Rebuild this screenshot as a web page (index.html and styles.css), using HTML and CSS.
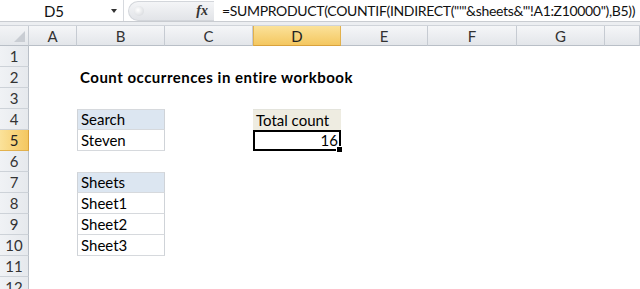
FILE: index.html
```html
<!DOCTYPE html>
<html>
<head>
<meta charset="utf-8">
<link rel="stylesheet" href="styles.css">
</head>
<body>
<div class="app">
  <div class="fbar">
    <div class="namebox"><span class="nb-text">D5</span><span class="nb-arrow"></span></div>
    <div class="fx-pill"><span class="knob"></span><span class="fx">fx</span></div>
    <div class="formula">=SUMPRODUCT(COUNTIF(INDIRECT("'"&amp;sheets&amp;"'!A1:Z10000"),B5))</div>
  </div>
  <div class="gap"></div>
  <div class="sheet">
    <div class="corner"><span class="tri"></span></div>
    <div class="ch">A</div><div class="ch">B</div><div class="ch">C</div><div class="ch ch-sel">D</div><div class="ch">E</div><div class="ch">F</div><div class="ch">G</div><div class="ch"></div>

    <div class="rh">1</div><div class="c"></div><div class="c"></div><div class="c"></div><div class="c"></div><div class="c"></div><div class="c"></div><div class="c"></div><div class="c"></div>

    <div class="rh">2</div><div class="c"></div><div class="c title">Count occurrences in entire workbook</div><div class="c"></div><div class="c"></div><div class="c"></div><div class="c"></div><div class="c"></div><div class="c"></div>

    <div class="rh">3</div><div class="c"></div><div class="c"></div><div class="c"></div><div class="c"></div><div class="c"></div><div class="c"></div><div class="c"></div><div class="c"></div>

    <div class="rh">4</div><div class="c"></div><div class="c tb top hdr-blue">Search</div><div class="c"></div><div class="c tot">Total count</div><div class="c"></div><div class="c"></div><div class="c"></div><div class="c"></div>

    <div class="rh rh-sel">5</div><div class="c"></div><div class="c tb">Steven</div><div class="c"></div><div class="c active">16<span class="handle"></span></div><div class="c"></div><div class="c"></div><div class="c"></div><div class="c"></div>

    <div class="rh">6</div><div class="c"></div><div class="c"></div><div class="c"></div><div class="c"></div><div class="c"></div><div class="c"></div><div class="c"></div><div class="c"></div>

    <div class="rh">7</div><div class="c"></div><div class="c tb top hdr-blue">Sheets</div><div class="c"></div><div class="c"></div><div class="c"></div><div class="c"></div><div class="c"></div><div class="c"></div>

    <div class="rh">8</div><div class="c"></div><div class="c tb">Sheet1</div><div class="c"></div><div class="c"></div><div class="c"></div><div class="c"></div><div class="c"></div><div class="c"></div>

    <div class="rh">9</div><div class="c"></div><div class="c tb">Sheet2</div><div class="c"></div><div class="c"></div><div class="c"></div><div class="c"></div><div class="c"></div><div class="c"></div>

    <div class="rh">10</div><div class="c"></div><div class="c tb">Sheet3</div><div class="c"></div><div class="c"></div><div class="c"></div><div class="c"></div><div class="c"></div><div class="c"></div>

    <div class="rh">11</div><div class="c"></div><div class="c"></div><div class="c"></div><div class="c"></div><div class="c"></div><div class="c"></div><div class="c"></div><div class="c"></div>

    <div class="rh">12</div><div class="c"></div><div class="c"></div><div class="c"></div><div class="c"></div><div class="c"></div><div class="c"></div><div class="c"></div><div class="c"></div>
  </div>
</div>
</body>
</html>
```

FILE: styles.css
```css
html, body {
  margin: 0;
  padding: 0;
  background: #ffffff;
  overflow: hidden;
}
.app {
  width: 640px;
  height: 289px;
  overflow: hidden;
  font-family: Lato, "Liberation Sans", sans-serif;
  color: #000;
}
.fbar {
  height: 22px;
  display: flex;
  align-items: center;
  background: #fff;
  border-bottom: 1px solid #c9ccd1;
  box-sizing: border-box;
  overflow: hidden;
}
.namebox {
  flex: 0 0 124px;
  height: 22px;
  display: flex;
  align-items: center;
  box-sizing: border-box;
  border-right: 1px solid #d6d9de;
}
.nb-text {
  width: 108px;
  text-align: center;
  font-size: 15px;
  color: #111;
}
.nb-arrow {
  margin-left: 3px;
  width: 0;
  height: 0;
  border-left: 3px solid transparent;
  border-right: 3px solid transparent;
  border-top: 4px solid #333;
}
.fx-pill {
  flex: 0 0 86px;
  margin-left: 4px;
  height: 20px;
  border-radius: 10px 0 0 10px;
  background: linear-gradient(#f4f5f7, #e2e4e8);
  border: 1px solid #d3d6db;
  border-right: none;
  box-sizing: border-box;
  display: flex;
  align-items: center;
  justify-content: space-between;
  padding: 0 6px 0 5px;
}
.knob {
  width: 10px;
  height: 10px;
  border-radius: 50%;
  background: radial-gradient(circle at 40% 40%, #fff, #cfd2d7);
}
.fx {
  font-family: "Liberation Serif", serif;
  font-style: italic;
  font-weight: bold;
  font-size: 14px;
  color: #333;
}
.formula {
  flex: 0 0 auto;
  margin-left: 8px;
  font-size: 14px;
  white-space: nowrap;
  color: #111;
  letter-spacing: -0.33px;
}
.gap {
  height: 3px;
  background: #eceef1;
  border-bottom: 1px solid #d0d4da;
}
.sheet {
  display: grid;
  grid-template-columns: 29px 48px 88px 88px 88px 87px 89px 88px 1fr;
  grid-template-rows: 20px;
  grid-auto-rows: 21px;
}
.corner {
  background: linear-gradient(#f3f4f6, #e4e7eb);
  border-right: 1px solid #c6cbd2;
  border-bottom: 1px solid #b9bfc7;
  box-sizing: border-box;
  position: relative;
}
.tri {
  position: absolute;
  right: 3px;
  bottom: 3px;
  width: 0;
  height: 0;
  border-left: 11px solid transparent;
  border-bottom: 11px solid #c9cdd3;
}
.ch {
  background: linear-gradient(#f5f6f8, #e3e6ea);
  border-right: 1px solid #c6cbd2;
  border-bottom: 1px solid #b9bfc7;
  box-sizing: border-box;
  text-align: center;
  font-size: 15px;
  line-height: 20px;
  color: #333;
}
.ch-sel {
  background: linear-gradient(#fbe29a, #f4c760);
  border-right: 1px solid #e2b14d;
  border-left: 1px solid #e2b14d;
  border-bottom: 1px solid #d9a23d;
  color: #222;
}
.rh {
  background: linear-gradient(90deg, #f0f2f5, #e6e9ed);
  border-right: 1px solid #b9bfc7;
  border-bottom: 1px solid #cdd2d8;
  box-sizing: border-box;
  text-align: center;
  font-size: 15px;
  line-height: 20px;
  color: #333;
}
.rh-sel {
  background: linear-gradient(90deg, #fbe29a, #f4c760);
  border-right: 1px solid #d9a23d;
  border-bottom: 1px solid #e2b14d;
  color: #222;
}
.c {
  box-sizing: border-box;
  font-size: 15px;
  line-height: 21px;
  padding: 0 3px;
  white-space: nowrap;
  position: relative;
}
.title {
  font-weight: bold;
  letter-spacing: 0.5px;
  z-index: 1;
}
.tb {
  border-left: 1px solid #cfd3d8;
  border-right: 1px solid #cfd3d8;
  border-bottom: 1px solid #d6d9dd;
  line-height: 20px;
}
.top {
  border-top: 1px solid #d6d9dd;
  line-height: 19px;
}
.hdr-blue {
  background: #dce6f1;
}
.tot {
  background: #eeece1;
  border-top: 1px solid #e4e4dc;
  line-height: 20px;
}
.active {
  border: 2px solid #000;
  text-align: right;
  line-height: 17px;
  padding: 0 1px;
}
.handle {
  position: absolute;
  right: -4px;
  bottom: -4px;
  width: 5px;
  height: 5px;
  background: #000;
  border: 1px solid #fff;
}
```
